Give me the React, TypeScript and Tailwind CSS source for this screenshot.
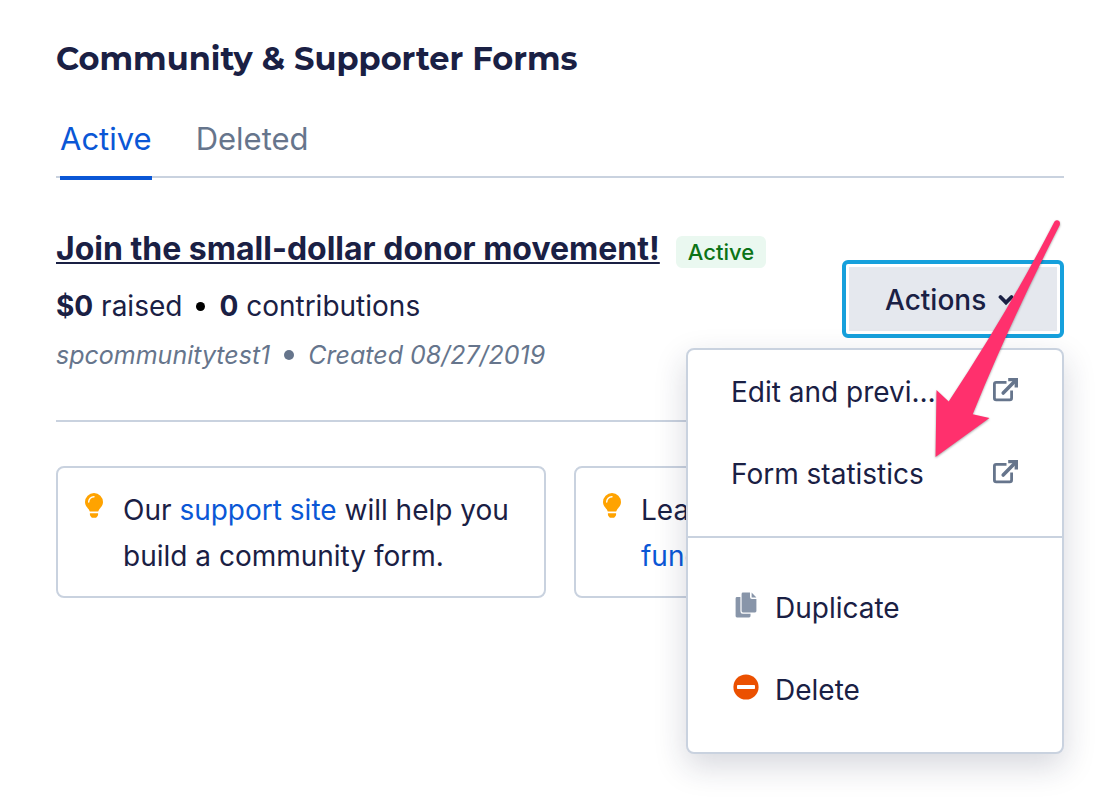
import { useState } from "react";

//icons
function ExternalIcon() {
  return (
    <svg width="25" height="24" viewBox="0 0 25 24" fill="none" aria-hidden="true" className="mb-1 shrink-0">
      <path
        d="M13.5 4.3H3.2Q1.4 4.3 1.4 6.1V20Q1.4 21.8 3.2 21.8H16.8Q18.6 21.8 18.6 20V12.6"
        stroke="#66758c"
        strokeWidth="2.8"
      />
      <path d="M10.2 15L22 3" stroke="#66758c" strokeWidth="3.6" strokeLinecap="round" />
      <path d="M15.2 0H25V9.6H21.6V3.2H15.2Z" fill="#66758c" />
    </svg>
  );
}

function CopyIcon() {
  return (
    <svg width="26" height="26" viewBox="0 0 26 26" fill="#8895a9" aria-hidden="true" className="mb-1.5 shrink-0">
      <path d="M4 5H7.4V19.3Q7.4 21.8 9.8 21.8H17.5V24Q17.5 25.4 16.1 25.4H4Q2.6 25.4 2.6 24V6.4Q2.6 5 4 5Z" />
      <path d="M10 0.6H17V5Q17 7 19 7H23.4V19Q23.4 20.4 22 20.4H10Q8.6 20.4 8.6 19V2Q8.6 0.6 10 0.6Z" />
      <path d="M18.6 0.6L23.4 5.4H18.6Z" />
    </svg>
  );
}

function MinusIcon() {
  return (
    <svg width="26" height="26" viewBox="0 0 26 26" aria-hidden="true" className="mb-1.5 shrink-0">
      <circle cx="13" cy="13" r="12.6" fill="#eb5000" />
      <rect x="4" y="11" width="18" height="4" rx="0.8" fill="#fff" />
    </svg>
  );
}

function BulbIcon() {
  return (
    <svg width="18" height="25" viewBox="0 0 18 25" fill="#ffa300" aria-hidden="true" className="mt-1.5 shrink-0">
      <path d="M9 0A9 9 0 0 1 18 9C18 13.3 14.6 14.8 13.2 18.4H4.8C3.4 14.8 0 13.3 0 9A9 9 0 0 1 9 0Z" />
      <path d="M4.9 20.3H13.1V21.6Q13.1 22.3 12.6 22.9L11.6 24.2Q11.1 24.8 10.3 24.8H7.7Q6.9 24.8 6.4 24.2L5.4 22.9Q4.9 22.3 4.9 21.6Z" />
      <path d="M3.7 9A5.3 5.3 0 0 1 9 3.7" fill="none" stroke="#fff" strokeWidth="1.4" strokeLinecap="round" />
    </svg>
  );
}

function Pointer() {
  return (
    <svg
      width="134"
      height="246"
      viewBox="0 0 134 246"
      aria-hidden="true"
      className="pointer-events-none absolute -top-11 right-0 z-20 drop-shadow-[0_1px_1px_rgba(0,0,0,0.35)]"
    >
      <path
        d="M124.5 5.5Q127 3 129.5 5.5Q130.3 7 129.8 9Q81 104 42.7 198.3L59.5 202L5.5 241L6.5 174L18.7 185.5Q78 96 124.5 5.5Z"
        fill="#ff306d"
      />
    </svg>
  );
}

const tabs = ["Active", "Deleted"];

const links = ["Edit and preview form", "Form statistics"];

export default function App() {
  const [tab, setTab] = useState("Active");
  const [isMenuOpen, setIsMenuOpen] = useState<boolean>(true);

  return (
    <main className="min-h-screen bg-white pt-[41px] pr-12 pb-14 pl-14 font-['Inter',sans-serif] text-[28px] leading-10 text-[#1a2044]">
      <h1 className="font-[Montserrat,Inter,sans-serif] text-[32px] leading-9 font-bold whitespace-nowrap">
        Community &amp; Supporter Forms
      </h1>

      <nav className="mt-[42px] flex gap-11 border-b-2 border-[#c9d2df] pl-1 text-[31px]">
        {tabs.map((name) => (
          <button
            key={name}
            type="button"
            onClick={() => setTab(name)}
            className={`-mb-1 border-b-4 pb-[17px] ${
              tab === name ? "border-[#0a57d6] text-[#0a57d6]" : "border-transparent text-[#66758c]"
            }`}
          >
            {name}
          </button>
        ))}
      </nav>

      <section className="flex items-start justify-between border-b-2 border-[#c9d2df] pt-[51px] pb-[45px]">
        <div>
          <div className="flex items-center gap-4">
            <h2 className="text-[32px] font-bold">
              <a href="#form" className="underline decoration-2 underline-offset-2">
                Join the small-dollar donor movement!
              </a>
            </h2>
            <span className="mt-1.5 rounded-md bg-[#eaf8f0] px-3 text-[22px] leading-8 font-medium text-[#0b7316]">
              Active
            </span>
          </div>
          <p className="mt-[17px] flex items-center gap-3.5">
            <span>
              <b>$0</b> raised
            </span>
            <span className="size-[9px] rounded-full bg-black" />
            <span>
              <b>0</b> contributions
            </span>
          </p>
          <p className="mt-[9px] flex items-center gap-3.5 text-[25px] text-[#66758c] italic">
            <span>spcommunitytest1</span>
            <span className="size-2.5 rounded-full bg-[#66758c]" />
            <span>Created 08/27/2019</span>
          </p>
        </div>

        <div className="relative mt-[31px]">
          <button
            type="button"
            aria-expanded={isMenuOpen}
            onClick={() => setIsMenuOpen((prev) => !prev)}
            className="block w-[222px] rounded-md border-4 border-[#16a0dc] p-[3px] font-medium"
          >
            <span className="flex h-16 items-center gap-3 bg-[#e5e8ee] pt-0.5 pl-9">
              Actions
              <svg width="16" height="12" viewBox="0 0 16 12" fill="none" aria-hidden="true">
                <path d="M2.5 3L8 8.5L13.5 3" stroke="#1a2044" strokeWidth="3.8" strokeLinecap="round" />
              </svg>
            </span>
          </button>

          {isMenuOpen && (
            <div className="absolute top-[88px] right-0 z-10 w-[378px] rounded-lg border-2 border-[#c9d2df] bg-white shadow-[0_12px_32px_rgba(26,32,68,0.18)]">
              <div className="border-b-2 border-[#c9d2df] pt-px pb-[21px]">
                {links.map((name) => (
                  <a key={name} href="#form" className="flex h-[82px] items-center gap-14 px-11 pl-[43px]">
                    <span className="min-w-0 flex-1 truncate">{name}</span>
                    <ExternalIcon />
                  </a>
                ))}
              </div>
              <div className="pt-[29px] pb-[21px]">
                <button type="button" className="flex h-[82px] w-full items-center gap-4 px-[45px]">
                  <CopyIcon />
                  Duplicate
                </button>
                <button type="button" className="flex h-[82px] w-full items-center gap-4 px-[45px]">
                  <MinusIcon />
                  Delete
                </button>
              </div>
            </div>
          )}
          <Pointer />
        </div>
      </section>

      <div className="mt-11 grid grid-cols-2 gap-7 leading-[46px]">
        <div className="flex gap-5 rounded-lg border-2 border-[#c9d2df] pt-[19px] pr-4 pb-[17px] pl-[27px]">
          <BulbIcon />
          <p>
            Our{" "}
            <a href="#support" className="text-[#0a57d6]">
              support site
            </a>{" "}
            will help you build a community form.
          </p>
        </div>
        <div className="flex gap-5 rounded-lg border-2 border-[#c9d2df] pt-[19px] pr-4 pb-[17px] pl-[27px]">
          <BulbIcon />
          <p>
            Learn more about
            <br />
            <a href="#fundraising" className="text-[#0a57d6]">
              fundraising
            </a>
          </p>
        </div>
      </div>
    </main>
  );
}
